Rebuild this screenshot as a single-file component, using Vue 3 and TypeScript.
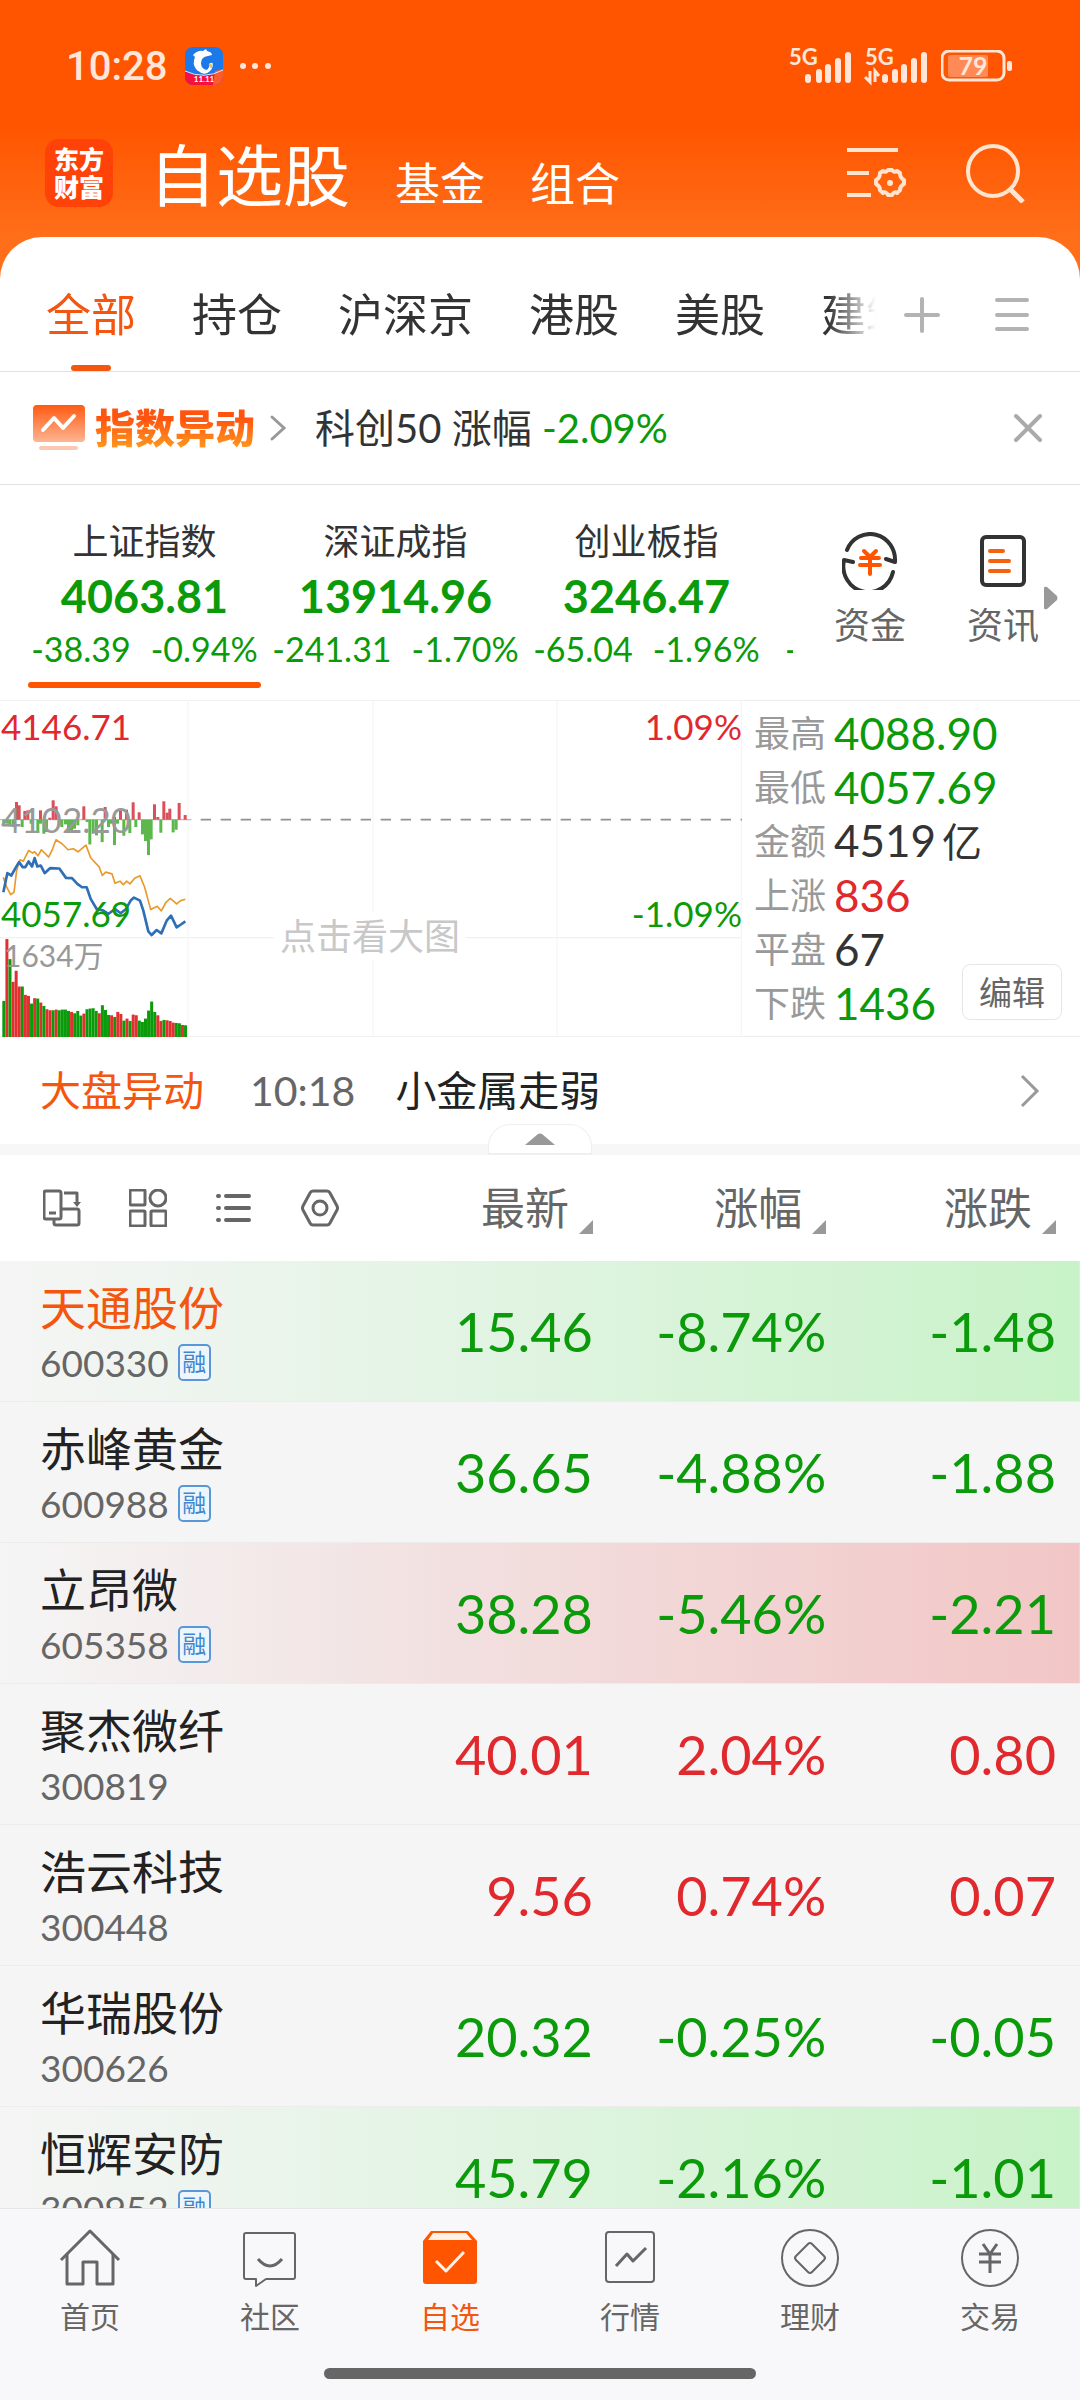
<script setup lang="ts">
import { ref } from 'vue'

type Trend = 'up' | 'down'
type Tint = 'green' | 'red' | 'none'

interface IndexQuote {
  name: string
  value: string
  diff: string
  pct: string
}

interface Stat {
  label: string
  value: string
  unit?: string
  tone: 'up' | 'down' | 'flat'
}

interface Stock {
  name: string
  code: string
  margin: boolean
  price: string
  pct: string
  diff: string
  trend: Trend
  tint: Tint
  active?: boolean
}

const groups = ['全部', '持仓', '沪深京', '港股', '美股', '建筑']
const activeGroup = ref('全部')

const indices: IndexQuote[] = [
  { name: '上证指数', value: '4063.81', diff: '-38.39', pct: '-0.94%' },
  { name: '深证成指', value: '13914.96', diff: '-241.31', pct: '-1.70%' },
  { name: '创业板指', value: '3246.47', diff: '-65.04', pct: '-1.96%' },
  { name: '', value: '', diff: '-', pct: '' },
]

const stats: Stat[] = [
  { label: '最高', value: '4088.90', tone: 'down' },
  { label: '最低', value: '4057.69', tone: 'down' },
  { label: '金额', value: '4519', unit: '亿', tone: 'flat' },
  { label: '上涨', value: '836', tone: 'up' },
  { label: '平盘', value: '67', tone: 'flat' },
  { label: '下跌', value: '1436', tone: 'down' },
]

const columns = ['最新', '涨幅', '涨跌']

const stocks: Stock[] = [
  { name: '天通股份', code: '600330', margin: true, price: '15.46', pct: '-8.74%', diff: '-1.48', trend: 'down', tint: 'green', active: true },
  { name: '赤峰黄金', code: '600988', margin: true, price: '36.65', pct: '-4.88%', diff: '-1.88', trend: 'down', tint: 'none' },
  { name: '立昂微', code: '605358', margin: true, price: '38.28', pct: '-5.46%', diff: '-2.21', trend: 'down', tint: 'red' },
  { name: '聚杰微纤', code: '300819', margin: false, price: '40.01', pct: '2.04%', diff: '0.80', trend: 'up', tint: 'none' },
  { name: '浩云科技', code: '300448', margin: false, price: '9.56', pct: '0.74%', diff: '0.07', trend: 'up', tint: 'none' },
  { name: '华瑞股份', code: '300626', margin: false, price: '20.32', pct: '-0.25%', diff: '-0.05', trend: 'down', tint: 'none' },
  { name: '恒辉安防', code: '300952', margin: true, price: '45.79', pct: '-2.16%', diff: '-1.01', trend: 'down', tint: 'green' },
]

const tabs = ['首页', '社区', '自选', '行情', '理财', '交易']

// Chart series, in chart units (three units to a pixel, y grows downwards)
const BASE = 1008
const MID = 358
const volumeTops = [
  900, 715, 775, 843, 810, 857, 857, 882, 885, 908, 892, 893, 905, 915, 925, 928, 928, 926, 928, 926,
  926, 930, 933, 937, 930, 944, 938, 925, 923, 922, 930, 937, 913, 927, 942, 943, 948, 933, 939, 959,
  953, 960, 941, 943, 959, 963, 953, 929, 902, 933, 943, 960, 957, 958, 960, 965, 966, 967, 972, 973,
]
const volumeTones = 'GRGRRRGRRGRGRGRRGRGGGGRGGGRGGGGRGGGRGRRGRGRRGGGGGGRRGRRRGGRG'
const volumes = volumeTops.map((top, i) => ({
  x: 7 + i * 9.24,
  top,
  height: BASE - top,
  up: volumeTones[i] === 'R',
}))

const buys: [number, number][] = [
  [50, 305], [58, 315], [75, 332], [84, 330], [122, 330], [150, 352], [160, 300], [169, 318], [252, 318],
  [316, 320], [344, 350], [362, 332], [380, 328], [400, 306], [418, 336], [464, 312], [474, 350], [492, 303],
  [502, 337], [510, 325], [538, 308], [556, 344],
]
const sells: [number, number][] = [
  [12, 375], [22, 370], [30, 378], [40, 380], [67, 380], [94, 370], [114, 398], [122, 370], [132, 400],
  [140, 395], [178, 375], [186, 380], [197, 372], [206, 398], [215, 390], [224, 385], [234, 375], [262, 365],
  [270, 432], [280, 400], [290, 405], [307, 425], [326, 380], [335, 370], [344, 434], [353, 370], [372, 406],
  [390, 398], [408, 380], [428, 402], [437, 422], [446, 464], [454, 417], [483, 397], [520, 396], [529, 388],
]

const priceLine =
  '10,575 22,518 34,525 48,500 57,485 68,500 76,500 86,483 96,498 104,473 112,498 122,495 134,518 150,503 178,504 198,532 216,533 232,550 246,560 260,560 272,595 290,625 310,630 325,640 345,625 362,638 378,625 392,600 402,591 420,600 430,630 445,692 455,703 470,688 484,698 500,660 513,645 530,680 545,670 556,662'
const averageLine =
  '10,530 20,560 32,582 42,575 50,510 60,478 70,482 86,450 98,458 104,454 114,466 124,448 146,470 156,450 168,418 186,430 204,448 220,445 234,454 258,434 272,472 298,500 307,525 317,515 336,520 345,548 360,542 370,552 380,542 390,550 404,533 420,526 434,560 452,627 472,617 484,631 498,605 511,593 530,610 542,600 556,596'
</script>

<template>
  <div class="app">
    <header class="hero">
      <div class="status">
        <time class="clock">10:28</time>
        <svg class="app-badge" viewBox="0 0 38 38" aria-hidden="true">
          <defs>
            <clipPath id="badge-clip"><rect width="38" height="38" rx="8" /></clipPath>
          </defs>
          <g clip-path="url(#badge-clip)">
            <rect width="38" height="38" fill="#1b79ea" />
            <path d="M0 24 Q19 33 38 23 V38 H0Z" fill="#f3113f" />
            <path d="M30 24 L38 22 V38 H28Z" fill="#fb5a2a" />
            <path d="M0 24 Q19 33 38 23" fill="none" stroke="#d9e6ff" stroke-width="1" />
            <path d="M8 8 Q13 3 18 4 L21 2 L22 4 Q27 5 27 8 L23 9 Q16 10 16 16 Q16 22 22 23 Q14 27 11 22 Q7 17 10 10Z" fill="#fff" />
            <path d="M14 22 Q19 28 24 23 Q27 20 26 16" fill="none" stroke="#fff" stroke-width="3" />
            <path d="M24 18 Q27 17 26 21" fill="none" stroke="#f2c14a" stroke-width="2" />
            <text x="19" y="35" text-anchor="middle" font-size="8" font-weight="700" fill="#fff">11.11</text>
          </g>
        </svg>
        <svg class="more" viewBox="0 0 32 8" aria-hidden="true">
          <circle cx="4" cy="4" r="3" /><circle cx="16" cy="4" r="3" /><circle cx="29" cy="4" r="3" />
        </svg>
        <span class="spacer"></span>
        <svg class="signal" viewBox="0 0 63 44" aria-hidden="true">
          <text x="0" y="21" font-size="22" font-weight="700">5G</text>
          <path d="M19 36V33M30 36V28M39 36V23M49 36V17M59 36V11" />
        </svg>
        <svg class="signal" viewBox="0 0 63 44" aria-hidden="true">
          <text x="0" y="21" font-size="22" font-weight="700">5G</text>
          <path d="M20 36V33M30 36V28M39 36V23M49 36V17M59 36V11" />
          <path class="thin" d="M5 27V38L0 33M10 38V27L14 32" />
        </svg>
        <svg class="battery" viewBox="0 0 71 32" aria-hidden="true">
          <rect x="7" y="5" width="40" height="22" rx="2" fill="#ff8a55" />
          <rect x="1" y="1" width="62" height="29" rx="7" fill="none" stroke="#ffe6d8" stroke-width="3" />
          <rect x="66" y="11" width="5" height="10" rx="2" fill="#ffe6d8" />
          <text x="32" y="25" text-anchor="middle" font-size="25" font-weight="700" fill="#ffe6d8">79</text>
        </svg>
      </div>

      <div class="titlebar">
        <a class="logo" href="#home"><span>东方</span><span>财富</span></a>
        <nav class="sections">
          <a class="current" href="#watchlist">自选股</a>
          <a href="#funds">基金</a>
          <a href="#portfolio">组合</a>
        </nav>
        <button class="icon-btn" type="button" aria-label="列表设置">
          <svg width="60" height="58" viewBox="0 0 60 58" fill="none" stroke="#ffe4d0" stroke-width="4">
            <path d="M1 6H52M1 29H23M1 51H25" />
            <path
              d="M37 27q3 2 5-1h4q2 3 5 1l3 2q0 5 4 7v4q-4 2-4 6l-3 3q-3-2-5 2h-4q-2-4-5-2l-3-3q0-4-4-6v-4q4-2 4-7z"
              stroke-linejoin="round"
            />
            <circle cx="44" cy="39" r="3" fill="#ffe4d0" stroke="none" />
          </svg>
        </button>
        <button class="icon-btn search" type="button" aria-label="搜索">
          <svg width="60" height="60" viewBox="0 0 60 60" fill="none" stroke="#ffe4d0" stroke-width="4">
            <circle cx="27" cy="28" r="25" />
            <path d="M44 46L57 59" stroke-width="5" />
          </svg>
        </button>
      </div>
    </header>

    <main class="sheet">
      <div class="groups">
        <div class="group-list">
          <button
            v-for="g in groups"
            :key="g"
            type="button"
            :class="{ on: g === activeGroup }"
            @click="activeGroup = g"
          >
            {{ g }}
          </button>
        </div>
        <button class="icon-btn" type="button" aria-label="新增分组">
          <svg width="36" height="38" viewBox="0 0 36 38" stroke="#b3b3b3" stroke-width="4" stroke-linecap="round">
            <path d="M2 19H34M18 3V35" />
          </svg>
        </button>
        <button class="icon-btn menu" type="button" aria-label="管理分组">
          <svg width="34" height="38" viewBox="0 0 34 38" stroke="#b3b3b3" stroke-width="4" stroke-linecap="round">
            <path d="M2 4H32M2 19H32M2 33H32" />
          </svg>
        </button>
      </div>

      <div class="alert">
        <svg width="52" height="46" viewBox="0 0 52 46" aria-hidden="true">
          <defs>
            <linearGradient id="board" x1="0" y1="0" x2="0" y2="1">
              <stop offset="0" stop-color="#ff5a12" />
              <stop offset="1" stop-color="#fdb592" />
            </linearGradient>
          </defs>
          <rect width="52" height="37" rx="4" fill="url(#board)" />
          <path d="M10 25L21 13L30 23L41 11" fill="none" stroke="#fff" stroke-width="4" stroke-linecap="round" stroke-linejoin="round" />
          <path d="M8 43H43" stroke="#fbc9b2" stroke-width="4" stroke-linecap="round" />
        </svg>
        <strong>指数异动</strong>
        <svg width="18" height="28" viewBox="0 0 18 28" aria-hidden="true" fill="none" stroke="#999" stroke-width="3" stroke-linecap="round">
          <path d="M3 3L15 14L3 25" />
        </svg>
        <p>科创50 涨幅 <b>-2.09%</b></p>
        <button class="icon-btn" type="button" aria-label="关闭">
          <svg width="28" height="30" viewBox="0 0 28 30" stroke="#aaa" stroke-width="4" stroke-linecap="round">
            <path d="M2 3L26 27M26 3L2 27" />
          </svg>
        </button>
      </div>

      <div class="indices">
        <div class="index-list">
          <button v-for="(q, i) in indices" :key="i" type="button" :class="{ on: i === 0 }">
            <span class="iname">{{ q.name }}</span>
            <span class="ivalue">{{ q.value }}</span>
            <span class="ichange"><span>{{ q.diff }}</span><span>{{ q.pct }}</span></span>
          </button>
        </div>
        <a class="shortcut" href="#money">
          <svg width="56" height="58" viewBox="0 0 56 58" fill="none" stroke="#333" stroke-width="4" stroke-linecap="round" stroke-linejoin="round">
            <path d="M5 18A25 26 0 0 1 53 30L44 27" />
            <path d="M51 40A25 26 0 0 1 2 28L11 30" />
            <path d="M22 19L28 25L34 19M19 26H37M18 33H38M28 25V42" stroke="#ff5500" />
          </svg>
          资金
        </a>
        <a class="shortcut" href="#news">
          <svg width="56" height="58" viewBox="0 0 56 58" fill="none" stroke="#333" stroke-width="4" stroke-linecap="round">
            <rect x="7" y="5" width="42" height="48" rx="4" />
            <path d="M15 19H28M15 29H34M15 39H34" stroke="#f4620f" />
          </svg>
          资讯
        </a>
        <button class="icon-btn next" type="button" aria-label="更多">
          <svg width="14" height="24" viewBox="0 0 14 24" fill="#999"><path d="M0 2Q0 0 3 1L13 10Q14 12 13 14L3 23Q0 24 0 22Z" /></svg>
        </button>
      </div>

      <div class="board">
        <div class="chart">
          <svg viewBox="0 0 2226 1008" preserveAspectRatio="none" aria-hidden="true">
            <path d="M0 1H2226M0 711H2226M0 1007H2226" stroke="#ededed" stroke-width="3" />
            <path d="M564 0V1008M1119 0V1008M1671 0V1008M2224 0V1008" stroke="#f3f3f3" stroke-width="3" />
            <path d="M0 358H574" stroke="#bbb" stroke-width="4" />
            <path d="M602 358H2226" stroke="#909090" stroke-width="5" stroke-dasharray="31 29" />
            <rect v-for="b in buys" :key="`b${b[0]}`" :x="b[0] - 5" :y="b[1]" width="9" :height="MID - b[1]" fill="#d9505a" />
            <rect v-for="s in sells" :key="`s${s[0]}`" :x="s[0] - 5" :y="MID" width="9" :height="s[1] - MID" fill="#5cb84c" />
            <rect
              v-for="v in volumes"
              :key="v.x"
              :x="v.x"
              :y="v.top"
              width="9"
              :height="v.height"
              :fill="v.up ? '#e03030' : '#0a9a0a'"
            />
            <polyline :points="averageLine" fill="none" stroke="#e89a2c" stroke-width="5" stroke-linejoin="round" />
            <polyline :points="priceLine" fill="none" stroke="#2f6fb5" stroke-width="8" stroke-linejoin="round" />
          </svg>
          <span class="tick high up">4146.71</span>
          <span class="tick mid">4102.20</span>
          <span class="tick low down">4057.69</span>
          <span class="tick high right up">1.09%</span>
          <span class="tick low right down">-1.09%</span>
          <span class="tick vol">1634万</span>
          <a class="enlarge" href="#chart">点击看大图</a>
        </div>
        <div class="stats">
          <dl>
            <div v-for="s in stats" :key="s.label">
              <dt>{{ s.label }}</dt>
              <dd :class="s.tone">{{ s.value }}<small v-if="s.unit">{{ s.unit }}</small></dd>
            </div>
          </dl>
          <button class="edit" type="button">编辑</button>
        </div>
      </div>

      <a class="market" href="#market">
        <span class="mk">大盘异动</span>
        <time>10:18</time>
        <span class="msg">小金属走弱</span>
        <svg width="20" height="34" viewBox="0 0 20 34" aria-hidden="true" fill="none" stroke="#999" stroke-width="3">
          <path d="M2 2L17 17L2 32" />
        </svg>
      </a>
      <div class="strip">
        <button type="button" aria-label="收起">
          <svg width="30" height="12" viewBox="0 0 30 12" fill="#999"><path d="M0 12L13 1Q15 0 17 1L30 12Z" /></svg>
        </button>
      </div>

      <div class="list">
        <table>
          <thead>
            <tr>
              <th scope="col">
                <div class="tools">
                  <button class="icon-btn" type="button" aria-label="横屏">
                    <svg width="38" height="38" viewBox="0 0 38 38" fill="none" stroke="#666" stroke-width="3" stroke-linejoin="round">
                      <rect x="1" y="2" width="17" height="28" rx="2" />
                      <path d="M6 24H13M11 31V34Q11 36 13 36H34Q36 36 36 34V22Q36 20 34 20H18M21 4H34V14" />
                      <path d="M30 13H38L34 18Z" fill="#666" stroke="none" />
                    </svg>
                  </button>
                  <button class="icon-btn" type="button" aria-label="宫格">
                    <svg width="38" height="38" viewBox="0 0 38 38" fill="none" stroke="#666" stroke-width="3">
                      <rect x="1" y="1" width="15" height="15" rx="1" />
                      <circle cx="29" cy="9" r="8" />
                      <rect x="1" y="22" width="15" height="15" rx="1" />
                      <rect x="22" y="22" width="15" height="15" rx="1" />
                    </svg>
                  </button>
                  <button class="icon-btn" type="button" aria-label="列表">
                    <svg width="38" height="38" viewBox="0 0 38 38" fill="none" stroke="#666" stroke-width="4" stroke-linecap="round">
                      <path d="M11 7H34M11 19H34M11 31H34M3 7H4M3 19H4M3 31H4" />
                    </svg>
                  </button>
                  <button class="icon-btn" type="button" aria-label="设置">
                    <svg width="38" height="38" viewBox="0 0 38 38" fill="none" stroke="#666" stroke-width="3" stroke-linejoin="round">
                      <path d="M12 2H26Q28 2 29 4L36 17Q37 19 36 21L29 34Q28 36 26 36H12Q10 36 9 34L2 21Q1 19 2 17L9 4Q10 2 12 2Z" />
                      <circle cx="19" cy="19" r="7" />
                    </svg>
                  </button>
                </div>
              </th>
              <th v-for="c in columns" :key="c" scope="col">
                <button class="sort" type="button">
                  {{ c }}
                  <svg width="14" height="14" viewBox="0 0 14 14" aria-hidden="true"><path d="M14 0V14H0Z" fill="#999" /></svg>
                </button>
              </th>
            </tr>
          </thead>
          <tbody>
            <tr v-for="s in stocks" :key="s.code" :class="[`tint-${s.tint}`, { active: s.active }]">
              <td>
                <div class="sname">{{ s.name }}</div>
                <div class="scode">{{ s.code }}<i v-if="s.margin">融</i></div>
              </td>
              <td :class="s.trend">{{ s.price }}</td>
              <td :class="s.trend">{{ s.pct }}</td>
              <td :class="s.trend">{{ s.diff }}</td>
            </tr>
          </tbody>
        </table>
      </div>
    </main>

    <footer class="dock">
      <nav>
        <a v-for="(t, i) in tabs" :key="t" :href="`#tab-${i}`" :class="{ on: t === '自选' }">
          <svg width="62" height="62" viewBox="0 0 62 62" fill="none" stroke="#666" stroke-width="2" stroke-linejoin="round">
            <g v-if="i === 0" stroke-width="3">
              <path d="M2 34L31 5L60 34" />
              <path d="M8 28V58H24V36H38V58H54V28" />
            </g>
            <g v-else-if="i === 1">
              <path d="M7 7H54Q56 7 56 9V51Q56 53 54 53H27L17 60V53H7Q5 53 5 51V9Q5 7 7 7Z" />
              <path d="M19 33Q31 47 43 33" stroke-width="3" />
            </g>
            <g v-else-if="i === 2" stroke="none">
              <path d="M12 5H49L58 15V55Q58 58 55 58H7Q4 58 4 55V15Z" fill="#ff5500" />
              <path d="M14 7H47L53 14H9Z" fill="#fff0e8" />
              <path d="M17 35L27 45L45 26" stroke="#fff0e8" stroke-width="3" />
            </g>
            <g v-else-if="i === 3">
              <rect x="7" y="6" width="48" height="50" rx="3" />
              <path d="M17 40L28 28L34 35L47 22" stroke-width="3" />
            </g>
            <g v-else-if="i === 4">
              <circle cx="31" cy="32" r="28" />
              <path d="M29 18Q31 16 33 18L45 30Q47 32 45 34L33 46Q31 48 29 46L17 34Q15 32 17 30Z" />
            </g>
            <g v-else>
              <circle cx="31" cy="32" r="28" />
              <path d="M24 18L31 28L38 18M20 28H42M20 36H42M31 28V47" stroke-width="3" />
            </g>
          </svg>
          {{ t }}
        </a>
      </nav>
      <div class="home-bar"></div>
    </footer>
  </div>
</template>

<style>
body {
  background: #f8f8fa;
}
</style>

<style scoped>
.app {
  display: flex;
  flex-direction: column;
  height: 100vh;
  overflow: hidden;
  font-family: Lato, 'Noto Sans CJK SC', sans-serif;
  font-size: 36px;
  color: #333;
  background: linear-gradient(#ff5500 0, #ff5500 125px, #ff6f1a 240px);
}
* {
  box-sizing: border-box;
}
button {
  margin: 0;
  padding: 0;
  border: 0;
  background: none;
  font: inherit;
  color: inherit;
}
a {
  color: inherit;
  text-decoration: none;
}
svg {
  display: block;
  flex: none;
}
p,
dl,
dd {
  margin: 0;
}
.icon-btn {
  display: flex;
  flex: none;
}
.up {
  color: #e0282d;
}
.down {
  color: #0a9a0a;
}

/* status bar and title */
.status {
  display: flex;
  align-items: center;
  height: 132px;
  padding: 0 68px 0 66px;
  color: #ffe6d8;
}
.clock {
  font-family: Roboto, sans-serif;
  font-size: 40px;
  font-weight: 500;
}
.app-badge {
  width: 38px;
  height: 38px;
  margin-left: 18px;
}
.more {
  width: 32px;
  height: 8px;
  margin-left: 16px;
  fill: #ffe6d8;
}
.spacer {
  flex: 1;
}
.signal {
  width: 63px;
  height: 44px;
  margin-right: 13px;
  fill: #ffe6d8;
  stroke: none;
  overflow: visible;
}
.signal path {
  fill: none;
  stroke: #ffe6d8;
  stroke-width: 6;
  stroke-linecap: round;
}
.signal .thin {
  stroke-width: 3;
  stroke-linecap: butt;
}
.battery {
  width: 71px;
  height: 32px;
}
.titlebar {
  display: flex;
  align-items: center;
  height: 105px;
  padding: 0 54px 23px 45px;
  color: #fff;
}
.logo {
  display: flex;
  flex-direction: column;
  justify-content: center;
  align-items: center;
  width: 68px;
  height: 68px;
  border-radius: 14px;
  background: #ff4208;
  font-size: 25px;
  font-weight: 900;
  line-height: 28px;
}
.sections {
  display: flex;
  flex: 1;
  align-items: baseline;
  gap: 45px;
  margin-left: 36px;
  padding-top: 12px;
  font-size: 45px;
  line-height: 80px;
}
.sections .current {
  font-size: 67px;
}
.search {
  margin-left: 60px;
}

/* white sheet */
.sheet {
  display: flex;
  flex: 1;
  flex-direction: column;
  min-height: 0;
  border-radius: 42px 42px 0 0;
  background: #fff;
}
.groups {
  display: flex;
  flex: none;
  align-items: center;
  height: 135px;
  padding: 22px 51px 0 46px;
  border-bottom: 1px solid #e2e2e2;
}
.group-list {
  display: flex;
  flex: 1;
  gap: 56px;
  min-width: 0;
  overflow: hidden;
  -webkit-mask-image: linear-gradient(90deg, #000 calc(100% - 48px), transparent);
  mask-image: linear-gradient(90deg, #000 calc(100% - 48px), transparent);
}
.group-list button {
  position: relative;
  flex: none;
  height: 112px;
  font-size: 45px;
  line-height: 112px;
}
.group-list .on {
  color: #f4560f;
}
.group-list .on::after {
  content: '';
  position: absolute;
  bottom: 0;
  left: 50%;
  width: 40px;
  height: 6px;
  margin-left: -20px;
  border-radius: 3px;
  background: #f4560f;
}
.groups > .icon-btn {
  margin-left: 28px;
}
.groups > .menu {
  margin-left: 55px;
}

.alert {
  display: flex;
  flex: none;
  align-items: center;
  height: 113px;
  padding: 0 38px 0 33px;
  border-bottom: 1px solid #e2e2e2;
  font-size: 40px;
  line-height: 48px;
}
.alert strong {
  margin: 0 14px 0 10px;
  font-weight: 900;
  color: transparent;
  background: linear-gradient(#ff5410 30%, #ffa020);
  -webkit-background-clip: text;
  background-clip: text;
}
.alert p {
  flex: 1;
  margin-left: 28px;
}
.alert b {
  font-weight: 400;
  color: #0a9a0a;
}

.indices {
  display: flex;
  flex: none;
  height: 215px;
}
.index-list {
  display: flex;
  flex: 1;
  gap: 18px;
  min-width: 0;
  margin-right: 22px;
  padding-left: 28px;
  overflow: hidden;
}
.index-list button {
  position: relative;
  display: flex;
  flex: none;
  flex-direction: column;
  align-items: center;
  width: 233px;
  padding-top: 30px;
  white-space: nowrap;
  color: #0a9a0a;
}
.index-list button:last-child {
  align-items: flex-start;
  padding-left: 4px;
}
.index-list .on::after {
  content: '';
  position: absolute;
  right: 0;
  bottom: 12px;
  left: 0;
  height: 6px;
  border-radius: 3px;
  background: #ff5500;
}
.iname {
  height: 52px;
  font-size: 36px;
  line-height: 52px;
  color: #333;
}
.ivalue {
  height: 58px;
  font-size: 45px;
  font-weight: 700;
  line-height: 58px;
}
.ichange {
  display: flex;
  gap: 20px;
  font-size: 34px;
  line-height: 48px;
}
.shortcut {
  display: flex;
  flex-direction: column;
  align-items: center;
  width: 110px;
  padding-top: 47px;
  font-size: 36px;
  line-height: 70px;
  color: #666;
}
.shortcut + .shortcut {
  margin-left: 23px;
}
.next {
  align-self: center;
  margin: 10px 22px 0 -14px;
}

/* index chart */
.board {
  display: flex;
  flex: none;
}
.chart {
  position: relative;
  flex: 1;
  height: 337px;
}
.chart svg {
  width: 100%;
  height: 100%;
}
.tick {
  position: absolute;
  left: 1px;
  font-size: 35px;
  line-height: 40px;
}
.tick.right {
  right: 0;
  left: auto;
}
.high {
  top: 6px;
}
.mid {
  top: 99px;
  color: #999;
}
.low {
  top: 193px;
}
.vol {
  top: 235px;
  left: 4px;
  font-size: 30px;
  color: #999;
}
.enlarge {
  position: absolute;
  top: 212px;
  left: 50%;
  margin-left: -97px;
  padding: 0 6px;
  font-size: 36px;
  line-height: 48px;
  color: #c8c8c8;
  background: #fff;
}
.stats {
  position: relative;
  flex: 0 0 31.3%;
  padding: 5px 0 0 12px;
  border-top: 1px solid #ededed;
  border-bottom: 1px solid #ededed;
}
.stats dl > div {
  display: flex;
  align-items: center;
  gap: 8px;
  height: 54px;
  line-height: 54px;
}
.stats dt {
  font-size: 36px;
  color: #999;
}
.stats dd {
  font-size: 44px;
}
.stats small {
  margin-left: 6px;
  font-size: 40px;
}
.edit {
  position: absolute;
  right: 18px;
  bottom: 16px;
  width: 100px;
  height: 56px;
  border: 1px solid #e6e6e6;
  border-radius: 8px;
  background: #fff;
  font-size: 33px;
  line-height: 48px;
  color: #666;
}

.market {
  display: flex;
  flex: none;
  align-items: center;
  height: 107px;
  padding: 0 40px;
  font-size: 41px;
  line-height: 56px;
}
.mk {
  color: #f4560f;
}
.market time {
  margin: 0 40px 0 46px;
  color: #666;
}
.msg {
  flex: 1;
  color: #222;
}
.strip {
  display: flex;
  flex: none;
  align-items: flex-end;
  justify-content: center;
  height: 11px;
  background: #f7f7f7;
}
.strip button {
  position: relative;
  display: flex;
  align-items: center;
  justify-content: center;
  width: 104px;
  height: 31px;
  border: 1px solid #efefef;
  border-bottom-width: 2px;
  border-radius: 22px 22px 0 0;
  background: #fff;
}

/* watch list */
.list {
  flex: 1;
  min-height: 0;
  overflow: hidden;
}
table {
  width: 100%;
  table-layout: fixed;
  border-collapse: separate;
  border-spacing: 0;
}
th {
  width: 23.5%;
  height: 106px;
  padding: 0;
  font-weight: 400;
  text-align: right;
}
th:nth-child(2),
th:nth-child(3) {
  width: 21.6%;
}
th:first-child {
  width: auto;
}
th:last-child,
td:last-child {
  padding-right: 24px;
}
.tools {
  display: flex;
  gap: 48px;
  padding-left: 43px;
}
.sort {
  display: inline-flex;
  align-items: flex-end;
  gap: 10px;
  font-size: 44px;
  line-height: 56px;
  color: #666;
}
.sort svg {
  margin-bottom: 2px;
}
td {
  height: 141px;
  padding: 0;
  border-bottom: 1px solid #ececec;
  font-size: 54px;
  text-align: right;
}
td:first-child {
  padding-left: 40px;
  text-align: left;
  color: #222;
}
tbody tr {
  background: #f5f5f5;
}
.tint-green {
  background: linear-gradient(90deg, #f5f5f5, #e4f4e5 40%, #c8f2c8);
}
.tint-red {
  background: linear-gradient(90deg, #f5f5f5, #f2e1e1 40%, #f2c6c6);
}
.sname {
  padding-top: 2px;
  font-size: 46px;
  line-height: 60px;
}
.active .sname {
  color: #f4560f;
}
.scode {
  display: flex;
  align-items: center;
  gap: 9px;
  height: 48px;
  font-size: 37px;
  color: #666;
}
.scode i {
  width: 33px;
  height: 37px;
  border: 2px solid #5b97d6;
  border-radius: 5px;
  background: #eef6fd;
  font-size: 24px;
  font-style: normal;
  line-height: 32px;
  text-align: center;
  color: #3f86cf;
}

/* bottom bar */
.dock {
  flex: none;
  border-top: 1px solid #e6e6e6;
  background: #f8f8fa;
}
.dock nav {
  display: grid;
  grid-template-columns: repeat(6, 1fr);
  padding-top: 17px;
}
.dock a {
  display: flex;
  flex-direction: column;
  align-items: center;
  font-size: 30px;
  line-height: 56px;
  color: #666;
}
.dock .on {
  color: #f4560f;
}
.home-bar {
  width: 40%;
  height: 11px;
  margin: 24px auto 21px;
  border-radius: 6px;
  background: #666;
}
</style>
